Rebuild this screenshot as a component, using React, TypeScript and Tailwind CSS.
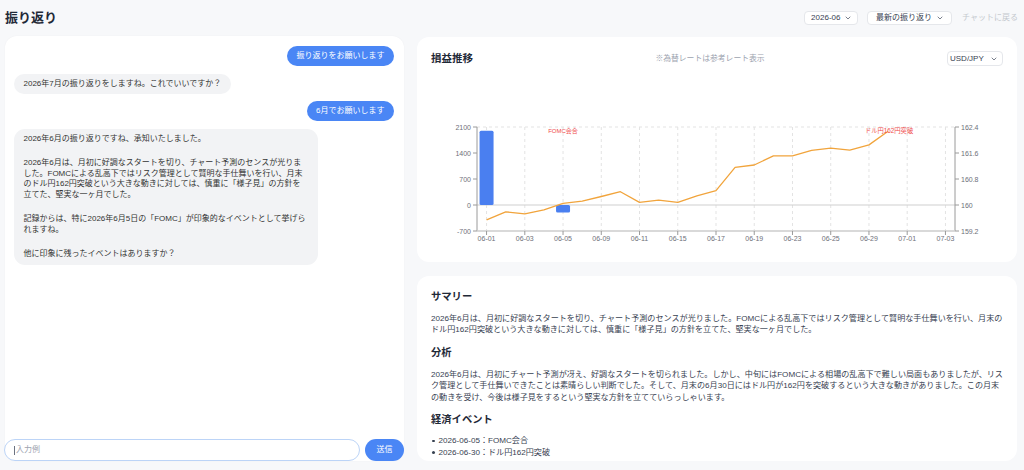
import React from 'react';

type Message = { from: 'user' | 'bot'; paras: string[][] };

const messages: Message[] = [
  { from: 'user', paras: [['振り返りをお願いします']] },
  { from: 'bot', paras: [['2026年7月の振り返りをしますね。これでいいですか？']] },
  { from: 'user', paras: [['6月でお願いします']] },
  {
    from: 'bot',
    paras: [
      ['2026年6月の振り返りですね、承知いたしました。'],
      [
        '2026年6月は、月初に好調なスタートを切り、チャート予測のセンスが光りま',
        'した。FOMCによる乱高下ではリスク管理として賢明な手仕舞いを行い、月末',
        'のドル円162円突破という大きな動きに対しては、慎重に「様子見」の方針を',
        '立てた、堅実な一ヶ月でした。',
      ],
      ['記録からは、特に2026年6月5日の「FOMC」が印象的なイベントとして挙げら', 'れますね。'],
      ['他に印象に残ったイベントはありますか？'],
    ],
  },
];

// category axis: trading days of June plus the first days of July
const days = [
  '06-01', '06-02', '06-03', '06-04', '06-05', '06-08', '06-09', '06-10', '06-11', '06-12',
  '06-15', '06-16', '06-17', '06-18', '06-19', '06-22', '06-23', '06-24', '06-25', '06-26',
  '06-29', '06-30', '07-01', '07-02', '07-03',
];

const rates = [
  159.54, 159.79, 159.73, 159.85, 160.05, 160.12, 160.26, 160.41, 160.08, 160.15, 160.08,
  160.28, 160.44, 161.16, 161.23, 161.51, 161.51, 161.68, 161.75, 161.69, 161.85, 162.27,
];

const pnl: Record<number, number> = { 0: 2000, 4: -200 };

const X0 = 478;
const X1 = 956;
const YT = 127;
const YB = 231;
const YZ = 205;
const band = (X1 - X0) / days.length;
const cx = (i: number) => X0 + band * (i + 0.5);
const yPnl = (v: number) => YZ - (v * (YZ - YT)) / 2100;
const yRate = (r: number) => YB - ((r - 159.2) * (YB - YT)) / 3.2;

const leftTicks = [2100, 1400, 700, 0, -700];
const rightTicks = ['162.4', '161.6', '160.8', '160', '159.2'];

const Chevron = () => (
  <svg width="6" height="4" viewBox="0 0 6 4" className="shrink-0">
    <path d="M1 1l2 2 2-2" fill="none" stroke="#6b7280" strokeWidth="0.9" strokeLinecap="round" />
  </svg>
);

const Select = ({ label, className }: { label: string; className: string }) => (
  <div
    className={`flex items-center justify-between rounded-[4px] border border-[#e5e7eb] bg-white text-[8px] text-[#374151] ${className}`}
  >
    <span>{label}</span>
    <Chevron />
  </div>
);

const PnlChart = () => {
  const linePoints = rates.map((r, i) => `${cx(i).toFixed(1)},${yRate(r).toFixed(1)}`).join(' ');
  return (
    <svg width="572" height="180" viewBox="432 70 572 180" className="mt-[4px] block">
      {/* grid */}
      <line x1={X0} x2={X1} y1={YT} y2={YT} stroke="#e3e3e3" strokeDasharray="3 3" />
      {days.map((d, i) =>
        i % 2 === 0 ? (
          <line key={d} x1={cx(i)} x2={cx(i)} y1={YT} y2={YB} stroke="#e3e3e3" strokeDasharray="3 3" />
        ) : null
      )}
      <line x1={X0} x2={X1} y1={YZ} y2={YZ} stroke="#cfcfcf" />

      {/* bars */}
      {Object.entries(pnl).map(([k, v]) => {
        const i = Number(k);
        const y = Math.min(yPnl(v), YZ);
        const h = Math.abs(yPnl(v) - YZ);
        return <rect key={k} x={cx(i) - 7} y={y} width="14" height={h} rx="1.5" fill="#4a7ff0" />;
      })}

      {/* rate line */}
      <polyline points={linePoints} fill="none" stroke="#f1a43c" strokeWidth="1.3" strokeLinejoin="round" />

      {/* axes */}
      <line x1={X0} x2={X0} y1={YT} y2={YB} stroke="#9a9a9a" />
      <line x1={X1} x2={X1} y1={YT} y2={YB} stroke="#9a9a9a" />
      <line x1={X0} x2={X1} y1={YB} y2={YB} stroke="#cccccc" strokeWidth="1.6" />
      {leftTicks.map((v, i) => {
        const y = YT + ((YB - YT) / 4) * i;
        return (
          <g key={v}>
            <line x1={X0 - 4} x2={X0} y1={y} y2={y} stroke="#9a9a9a" />
            <text x={X0 - 6} y={y + 2.5} fontSize="7" fill="#6e7079" textAnchor="end">
              {v}
            </text>
          </g>
        );
      })}
      {rightTicks.map((v, i) => {
        const y = YT + ((YB - YT) / 4) * i;
        return (
          <g key={v}>
            <line x1={X1} x2={X1 + 4} y1={y} y2={y} stroke="#9a9a9a" />
            <text x={X1 + 6} y={y + 2.5} fontSize="7" fill="#6e7079">
              {v}
            </text>
          </g>
        );
      })}
      {days.map((d, i) =>
        i % 2 === 0 ? (
          <g key={d}>
            <line x1={cx(i)} x2={cx(i)} y1={YB} y2={YB + 4} stroke="#9a9a9a" />
            <text x={cx(i)} y={YB + 10} fontSize="7" fill="#6e7079" textAnchor="middle">
              {d}
            </text>
          </g>
        ) : null
      )}

      {/* event marks */}
      <text x={cx(4)} y={133} fontSize="6" fill="#ef4b4b" textAnchor="middle">
        FOMC会合
      </text>
      <text x={cx(21) + 1} y={133} fontSize="6.3" fill="#ef4b4b" textAnchor="middle">
        ドル円162円突破
      </text>
    </svg>
  );
};

const Bubble = ({ msg }: { msg: Message }) => {
  if (msg.from === 'user') {
    return (
      <div className="self-end whitespace-nowrap rounded-full bg-[#4a86f5] px-[9.5px] py-[5px] text-[8px] leading-[10px] text-white">
        {msg.paras[0][0]}
      </div>
    );
  }
  const multi = msg.paras.length > 1;
  return (
    <div
      className={`self-start whitespace-nowrap bg-[#f2f3f5] px-[9.5px] text-[8px] text-[#333333] ${
        multi ? 'w-[304px] rounded-[11px] py-[5px] leading-[10.5px]' : 'rounded-full py-[5px] leading-[10px]'
      }`}
    >
      {msg.paras.map((lines, i) => (
        <p key={i} className={i > 0 ? 'mt-[14px]' : ''}>
          {lines.map((l, j) => (
            <span key={j} className="block">
              {l}
            </span>
          ))}
        </p>
      ))}
    </div>
  );
};

const summary = [
  '2026年6月は、月初に好調なスタートを切り、チャート予測のセンスが光りました。FOMCによる乱高下ではリスク管理として賢明な手仕舞いを行い、月末の',
  'ドル円162円突破という大きな動きに対しては、慎重に「様子見」の方針を立てた、堅実な一ヶ月でした。',
];

const analysis = [
  '2026年6月は、月初にチャート予測が冴え、好調なスタートを切られました。しかし、中旬にはFOMCによる相場の乱高下で難しい局面もありましたが、リス',
  'ク管理として手仕舞いできたことは素晴らしい判断でした。そして、月末の6月30日にはドル円が162円を突破するという大きな動きがありました。この月末',
  'の動きを受け、今後は様子見をするという堅実な方針を立てていらっしゃいます。',
];

const events = ['2026-06-05：FOMC会合', '2026-06-30：ドル円162円突破'];

const Lines = ({ lines }: { lines: string[] }) => (
  <div className="mt-[8.5px] whitespace-nowrap text-[8.1px] leading-[11.8px] text-[#374151]">
    {lines.map((l, i) => (
      <p key={i}>{l}</p>
    ))}
  </div>
);

export default function App() {
  return (
    <div className="h-[470px] w-[1024px] overflow-hidden bg-[#f7f8fa] pl-[5px] pr-[6px] font-['Liberation_Sans','Noto_Sans_CJK_JP',sans-serif]">
      <header className="flex h-[36px] items-center justify-between">
        <h1 className="text-[13px] font-bold text-[#1f2937]">振り返り</h1>
        <div className="flex items-center">
          <Select label="2026-06" className="h-[14px] w-[54px] px-[6px]" />
          <Select label="最新の振り返り" className="ml-[9px] h-[14px] w-[85px] px-[8px]" />
          <button className="ml-[10px] text-[8px] text-[#c4c8ce]">チャットに戻る</button>
        </div>
      </header>

      <div className="flex h-[425px] gap-[13px]">
        {/* chat */}
        <section className="flex w-[399px] flex-col rounded-[12px] bg-white shadow-[0_0_2px_rgba(0,0,0,0.04)]">
          <div className="flex flex-1 flex-col gap-[7.5px] overflow-hidden pl-[9px] pr-[10px] pt-[10px]">
            {messages.map((m, i) => (
              <Bubble key={i} msg={m} />
            ))}
          </div>
          <div className="-ml-px flex h-[22px] gap-[5px]">
            <div className="flex flex-1 items-center rounded-full border border-[#bcd4f7] bg-white px-[9px] text-[8px]">
              <span className="mr-[1px] h-[9px] w-px bg-[#6b7280]" />
              <span className="text-[#9ca3af]">入力例</span>
            </div>
            <button className="w-[39px] rounded-full bg-[#4a86f5] text-[8px] text-white">送信</button>
          </div>
        </section>

        {/* report */}
        <div className="flex w-[600px] flex-col gap-[14px] pt-px">
          <section className="h-[225px] rounded-[12px] bg-white px-[14px] pt-[14px]">
            <div className="flex h-[15px] items-center justify-between">
              <h2 className="text-[10.5px] font-bold text-[#1f2937]">損益推移</h2>
              <span className="text-[7.8px] text-[#9ca3af]">※為替レートは参考レート表示</span>
              <Select label="USD/JPY" className="h-[15px] w-[56px] pl-[2px] pr-[5px] text-[8.5px]" />
            </div>
            <PnlChart />
          </section>

          <section className="flex-1 overflow-hidden rounded-[12px] bg-white px-[14px] pt-[14px]">
            <h3 className="text-[10.3px] font-bold leading-[14px] text-[#1f2937]">サマリー</h3>
            <Lines lines={summary} />
            <h3 className="mt-[10px] text-[10.3px] font-bold leading-[14px] text-[#1f2937]">分析</h3>
            <Lines lines={analysis} />
            <h3 className="mt-[9px] text-[10.3px] font-bold leading-[14px] text-[#1f2937]">経済イベント</h3>
            <ul className="mt-[8px] text-[8.1px] leading-[11.8px] text-[#374151]">
              {events.map((e) => (
                <li key={e} className="flex items-center">
                  <span className="ml-[1px] mr-[4px] h-[2.5px] w-[2.5px] rounded-full bg-[#374151]" />
                  {e}
                </li>
              ))}
            </ul>
          </section>
        </div>
      </div>
    </div>
  );
}
